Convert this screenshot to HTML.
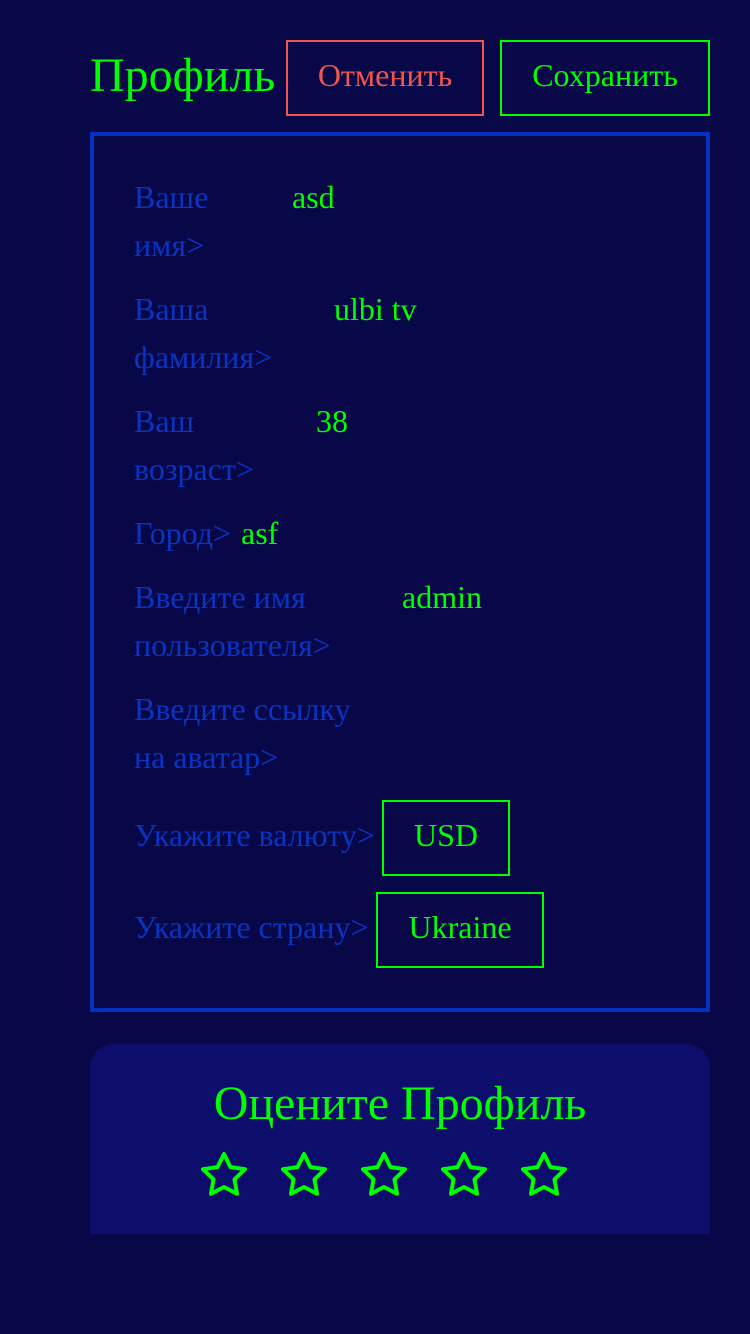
<!DOCTYPE html>
<html><head><meta charset="utf-8"><style>
*{margin:0;padding:0;box-sizing:border-box}
body{width:750px;height:1334px;background:#080848;font-family:"Liberation Serif",serif;position:relative;overflow:hidden}
.a{position:absolute;white-space:nowrap;line-height:48px}
.l{color:#0a33c2;font-size:32px}
.v{color:#00ff00;font-size:32px}
.box{position:absolute;border:2px solid #00ff00;color:#00ff00;font-size:32px;display:flex;align-items:center;justify-content:center;padding-bottom:5px}
</style></head><body>
<div class="a" style="left:90px;top:50px;font-size:48px;line-height:52px;color:#00ff00">Профиль</div>
<div class="box" style="left:286px;top:40px;width:198px;height:76px;border-color:#f0564f;color:#f0564f">Отменить</div>
<div class="box" style="left:500px;top:40px;width:210px;height:76px">Сохранить</div>
<div style="position:absolute;left:90px;top:132px;width:620px;height:880px;border:4px solid #0433c4"></div>
<div class="a l" style="left:134px;top:173px">Ваше</div><div class="a v" style="left:292px;top:173px">asd</div>
<div class="a l" style="left:134px;top:221px">имя&gt;</div>
<div class="a l" style="left:134px;top:285px">Ваша</div><div class="a v" style="left:334px;top:285px">ulbi tv</div>
<div class="a l" style="left:134px;top:333px">фамилия&gt;</div>
<div class="a l" style="left:134px;top:397px">Ваш</div><div class="a v" style="left:316px;top:397px">38</div>
<div class="a l" style="left:134px;top:445px">возраст&gt;</div>
<div class="a l" style="left:134px;top:509px">Город&gt;</div><div class="a v" style="left:241px;top:509px">asf</div>
<div class="a l" style="left:134px;top:573px">Введите имя</div><div class="a v" style="left:402px;top:573px">admin</div>
<div class="a l" style="left:134px;top:621px">пользователя&gt;</div>
<div class="a l" style="left:134px;top:685px">Введите ссылку</div>
<div class="a l" style="left:134px;top:733px">на аватар&gt;</div>
<div class="a l" style="left:134px;top:811px">Укажите валюту&gt;</div>
<div class="box" style="left:382px;top:800px;width:128px;height:76px">USD</div>
<div class="a l" style="left:134px;top:903px">Укажите страну&gt;</div>
<div class="box" style="left:376px;top:892px;width:168px;height:76px">Ukraine</div>
<div style="position:absolute;left:90px;top:1044px;width:620px;height:190px;background:#0d0d6b;border-radius:24px 24px 0 0"></div>
<div class="a" style="left:90px;width:620px;text-align:center;top:1076px;font-size:48px;line-height:56px;color:#00ff00">Оцените Профиль</div>
<svg style="position:absolute;left:0;top:0" width="750" height="1334">
<defs><path id="s" d="M0,-22 L6.5,-8.9 L21,-6.8 L10.5,3.4 L13,17.8 L0,11 L-13,17.8 L-10.5,3.4 L-21,-6.8 L-6.5,-8.9Z" fill="none" stroke="#00ff00" stroke-width="4" stroke-linejoin="round"/></defs>
<use href="#s" x="224" y="1176"/><use href="#s" x="304" y="1176"/><use href="#s" x="384" y="1176"/><use href="#s" x="464" y="1176"/><use href="#s" x="544" y="1176"/>
</svg>
</body></html>
